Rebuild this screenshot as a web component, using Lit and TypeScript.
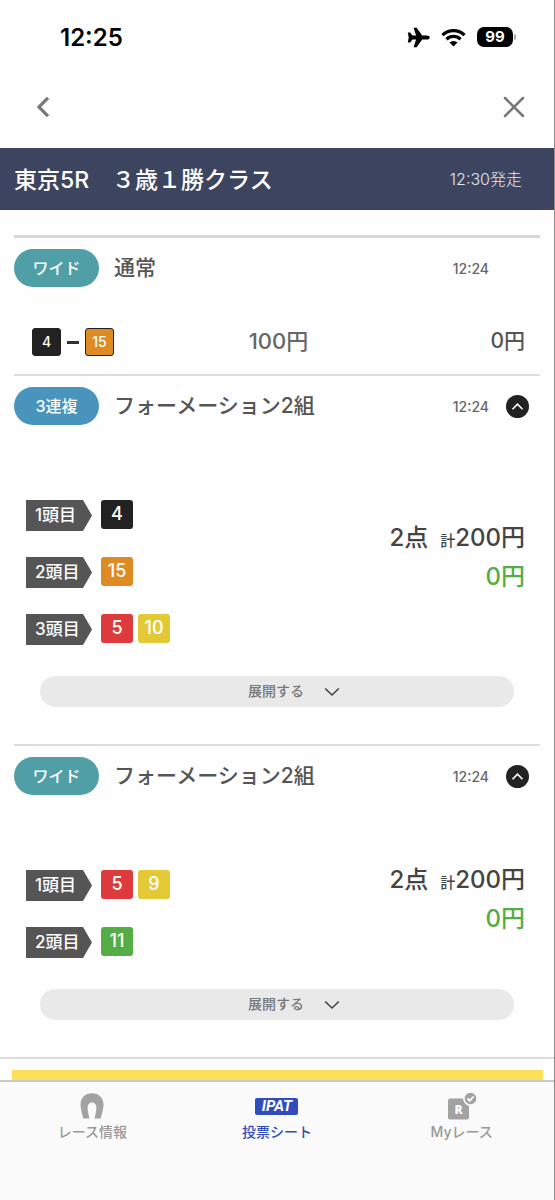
import { LitElement, html, css, nothing } from "lit";
import { customElement, property, state } from "lit/decorators.js";
import { classMap } from "lit/directives/class-map.js";

type Color = "black" | "orange" | "red" | "yellow" | "green";
interface Horse { no: number; color: Color }
interface Formation {
  kind: string;
  tone: "wide" | "trio";
  title: string;
  time: string;
  legs: Horse[][];
  points: string;
  total: string;
  payout: string;
}

const FORMATIONS: Formation[] = [
  {
    kind: "3連複", tone: "trio", title: "フォーメーション2組", time: "12:24",
    legs: [
      [{ no: 4, color: "black" }],
      [{ no: 15, color: "orange" }],
      [{ no: 5, color: "red" }, { no: 10, color: "yellow" }],
    ],
    points: "2点", total: "200円", payout: "0円",
  },
  {
    kind: "ワイド", tone: "wide", title: "フォーメーション2組", time: "12:24",
    legs: [
      [{ no: 5, color: "red" }, { no: 9, color: "yellow" }],
      [{ no: 11, color: "green" }],
    ],
    points: "2点", total: "200円", payout: "0円",
  },
];

const shared = css`
  * { box-sizing: border-box; }
  button { font: inherit; border: 0; padding: 0; background: none; cursor: pointer; }
  h1, h2, p { margin: 0; font-weight: 500; }
  svg { display: block; }
`;

@customElement("horse-chip")
export class HorseChip extends LitElement {
  @property({ type: Number }) no = 0;
  @property() color: Color = "black";
  @property({ type: Boolean }) outlined = false;

  static styles = [shared, css`
    .chip { display: block; width: 32px; height: 29px; border-radius: 3px; color: #fff;
      font-size: 18px; line-height: 27px; font-weight: 500; text-align: center; }
    .outlined { width: 29px; height: 28px; border: 1px solid #222; font-size: 14px; line-height: 26px; }
    .black { background: #222; }
    .orange { background: #df8b24; }
    .red { background: #dd3b3d; }
    .yellow { background: #e3c936; }
    .green { background: #54ad45; }
  `];

  render() {
    return html`<span class=${classMap({ chip: true, outlined: this.outlined, [this.color]: true })}>${this.no}</span>`;
  }
}

@customElement("bet-header")
export class BetHeader extends LitElement {
  @property() kind = "";
  @property() tone = "wide";
  @property() heading = "";
  @property() time = "";
  @property({ type: Boolean }) foldable = false;

  static styles = [shared, css`
    :host { display: block; }
    .head { display: flex; align-items: center; padding-right: 11px; }
    .pill { flex: none; width: 85px; height: 38px; border-radius: 19px; color: #fff;
      font-size: 16px; line-height: 38px; font-weight: 500; text-align: center; }
    .wide { background: #509fa7; }
    .trio { background: #4894bd; }
    .title { flex: 1; padding-left: 15px; font-size: 21px; line-height: 32px; color: #555; }
    .time { font-size: 14px; color: #666; }
    .fold { width: 23px; height: 23px; margin-left: 17px; border-radius: 50%; background: #222; }
    .blank { width: 23px; margin-left: 17px; }
  `];

  render() {
    return html`
      <div class="head">
        <span class="pill ${this.tone}">${this.kind}</span>
        <h2 class="title">${this.heading}</h2>
        <time class="time">${this.time}</time>
        ${this.foldable
          ? html`<button class="fold" aria-label="閉じる">
              <svg width="23" height="23" viewBox="0 0 23 23"><path d="M6.500 14.200l5-5 5 5" fill="none" stroke="#fff" stroke-width="1.600"/></svg>
            </button>`
          : html`<span class="blank"></span>`}
      </div>`;
  }
}

@customElement("formation-bet")
export class FormationBet extends LitElement {
  @property({ attribute: false }) bet!: Formation;

  static styles = [shared, css`
    :host { display: block; border-top: 2px solid #dcdcdc; padding: 11px 0 37px; }
    .body { display: flex; justify-content: space-between; align-items: center;
      margin: 44px 15px 31px 12px; }
    .legs { display: grid; gap: 26px; padding-top: 31px; }
    .leg { display: flex; gap: 5px; height: 31px; }
    .label { width: 66px; height: 31px; margin-right: 4px; padding-left: 9px; background: #555; color: #fff;
      font-size: 17px; line-height: 31px; font-weight: 500;
      clip-path: polygon(0 0, 57px 0, 100% 50%, 57px 100%, 0 100%); }
    .sum { font-size: 24px; line-height: 39px; color: #444; text-align: right; }
    .unit { margin-left: 12px; font-size: 15px; line-height: 1; }
    .payout { color: #54ad45; }
    .expand { display: flex; align-items: center; justify-content: center; gap: 20px;
      width: calc(100% - 52px); height: 31px; margin: 0 26px; padding-left: 34px; border-radius: 16px; background: #e9e9e9;
      font-size: 14px; font-weight: 500; color: #777; }
    .word { padding-bottom: 3px; }
  `];

  render() {
    const b = this.bet;
    return html`
      <bet-header kind=${b.kind} tone=${b.tone} heading=${b.title} time=${b.time} foldable></bet-header>
      <div class="body">
        <div class="legs">
          ${b.legs.map((leg, i) => html`
            <div class="leg">
              <span class="label">${i + 1}頭目</span>
              ${leg.map(h => html`<horse-chip no=${h.no} color=${h.color}></horse-chip>`)}
            </div>`)}
        </div>
        <div class="sum">
          <p>${b.points}<span class="unit">計</span>${b.total}</p>
          <p class="payout">${b.payout}</p>
        </div>
      </div>
      <button class="expand"><span class="word">展開する</span>
        <svg width="16" height="10" viewBox="0 0 16 10"><path d="M1.200 1.500L8 8l6.800-6.500" fill="none" stroke="#444" stroke-width="1.600"/></svg>
      </button>`;
  }
}

@customElement("app-root")
export class AppRoot extends LitElement {
  @state() private tab = 1;

  static styles = [shared, css`
    :host { display: flex; flex-direction: column; box-sizing: border-box; min-height: 100vh; background: #fefefe;
      border-right: 1px solid #8c8c8c; color: #555; font-family: Inter, "Noto Sans CJK JP", sans-serif; font-weight: 500; }
    .status { display: flex; align-items: center; justify-content: space-between; height: 74px; padding: 0 38px 0 60px; color: #000; }
    .clock { font-size: 24px; font-weight: 600; }
    .signals { display: flex; align-items: center; gap: 11px; }
    .battery { display: flex; align-items: center; gap: 1px; }
    .level { width: 36px; height: 20px; border-radius: 7px; background: #000; color: #fff; font-size: 15px; line-height: 20px;
      font-weight: 700; text-align: center; }
    .cap { width: 2px; height: 6px; border-radius: 0 2px 2px 0; background: #aaa; }
    .tools { display: flex; align-items: center; justify-content: space-between; height: 74px; padding: 0 24px 8px 27px; }
    .tool { display: grid; place-items: center; width: 32px; height: 32px; }
    .race { display: flex; align-items: center; justify-content: space-between; height: 62px; padding: 0 32px 3px 14px;
      background: #3d4460; color: #fff; }
    .name { font-size: 23px; }
    .start { font-size: 16px; font-weight: 300; color: #e2e4ec; }
    .sheet { flex: 1; display: flex; flex-direction: column; padding-top: 25px; }
    .list { padding: 0 14px; }
    .single { border-top: 3px solid #d8d8d8; padding: 11px 0 19px; }
    .line { display: grid; grid-template-columns: 1fr auto 1fr; align-items: center; height: 28px; margin-top: 40px;
      padding: 0 15px 0 18px; line-height: 28px; }
    .pair { display: flex; align-items: center; gap: 6px; }
    .dash { width: 12px; height: 3px; background: #333; }
    .stake { padding-bottom: 2px; font-size: 22px; color: #666; }
    .won { padding-bottom: 2px; font-size: 21px; text-align: right; }
    .notice { flex: 1; min-height: 23px; display: flex; border-top: 2px solid #dcdcdc; padding: 11px 11px 0 12px; }
    .strip { flex: 1; background: #fde05a; }
    .tabs { display: grid; grid-template-columns: repeat(3, 1fr); height: 120px; border-top: 2px solid #c8c8c8; background: #fafafa; }
    .tab { display: flex; flex-direction: column; align-items: center; gap: 2px; padding-top: 10px; color: #999;
      font-size: 14px; line-height: 20px; text-decoration: none; }
    .active { color: #304cbe; }
    .icon { display: grid; place-items: center; height: 28px; }
    .ipat { width: 43px; height: 17px; border-radius: 2px; background: #304cbe; color: #fff; font-size: 15px; line-height: 17px;
      font-weight: 700; font-style: italic; text-align: center; font-family: Roboto, sans-serif; }
    .mark { font: 800 12px "Open Sans", sans-serif; }
  `];

  private tabIcon(i: number) {
    if (i === 0) return html`<svg width="24" height="26" viewBox="0 0 24 26">
      <path d="M3.300 25.500C2 20.500.5 16 .5 11.500.5 4.700 5.300.2 12 .2s11.500 4.500 11.500 11.300c0 4.500-1.500 9-2.800 14h-6.200c.9-4 1.900-7.500 1.900-10.700 0-3.300-1.600-5.300-4.400-5.300s-4.400 2-4.400 5.300c0 3.200 1 6.700 1.900 10.700z" fill="#a2a2a2"/></svg>`;
    if (i === 1) return html`<span class="ipat">IPAT</span>`;
    return html`<svg width="30" height="28" viewBox="0 0 30 28">
      <rect x="1" y="6.500" width="21" height="21" rx="2" fill="#a2a2a2"/>
      <circle cx="23.500" cy="6.500" r="7.500" fill="#fafafa"/>
      <circle cx="23.500" cy="6.500" r="5.800" fill="#a2a2a2"/>
      <path d="M20.500 6.500l2.200 2.200 4-4.200" fill="none" stroke="#fff" stroke-width="1.800"/>
      <text class="mark" x="11.500" y="21.500" text-anchor="middle" fill="#fff">R</text></svg>`;
  }

  render() {
    return html`
      <div class="status">
        <span class="clock">12:25</span>
        <div class="signals">
          <svg width="23" height="21" viewBox="0 0 23 21"><path d="M22.800 10.500c0 1.200-1.300 2.100-3.200 2.100h-4.400L9.600 20.300H6.600l2.500-7.700H5.400L3.200 15.500H.8l.9-5-.9-5h2.400l2.200 2.900h3.700L6.600.7h3l5.600 7.700h4.400c1.900 0 3.200.9 3.200 2.100z" fill="#000"/></svg>
          <svg width="25" height="19" viewBox="0 0 25 19"><g fill="none" stroke="#000" stroke-width="3.200"><path d="M1.500 7.200a15.700 15.700 0 0 1 22 0"/><path d="M5.500 11.300a10 10 0 0 1 14 0"/></g><path d="M8.500 14.600a5.800 5.800 0 0 1 8 0l-4 4z" fill="#000"/></svg>
          <span class="battery"><span class="level">99</span><span class="cap"></span></span>
        </div>
      </div>
      <nav class="tools">
        <button class="tool" aria-label="戻る"><svg width="14" height="22" viewBox="0 0 14 22"><path d="M12 1.800L3 11l9 9.200" fill="none" stroke="#777" stroke-width="3.200"/></svg></button>
        <button class="tool" aria-label="閉じる"><svg width="22" height="22" viewBox="0 0 22 22"><path d="M2 2l18 18M20 2L2 20" fill="none" stroke="#777" stroke-width="2.500" stroke-linecap="round"/></svg></button>
      </nav>
      <header class="race">
        <h1 class="name">東京5R　３歳１勝クラス</h1>
        <span class="start">12:30発走</span>
      </header>
      <main class="sheet">
        <div class="list">
          <section class="single">
            <bet-header kind="ワイド" tone="wide" heading="通常" time="12:24"></bet-header>
            <div class="line">
              <div class="pair">
                <horse-chip no="4" color="black" outlined></horse-chip>
                <span class="dash"></span>
                <horse-chip no="15" color="orange" outlined></horse-chip>
              </div>
              <span class="stake">100円</span>
              <span class="won">0円</span>
            </div>
          </section>
          ${FORMATIONS.map(b => html`<formation-bet .bet=${b}></formation-bet>`)}
        </div>
        <div class="notice"><div class="strip"></div></div>
      </main>
      <nav class="tabs">
        ${["レース情報", "投票シート", "Myレース"].map((label, i) => html`
          <a href="#tab${i}" class=${classMap({ tab: true, active: this.tab === i })}
            aria-current=${this.tab === i ? "page" : nothing} @click=${() => (this.tab = i)}>
            <span class="icon">${this.tabIcon(i)}</span>${label}
          </a>`)}
      </nav>`;
  }
}
